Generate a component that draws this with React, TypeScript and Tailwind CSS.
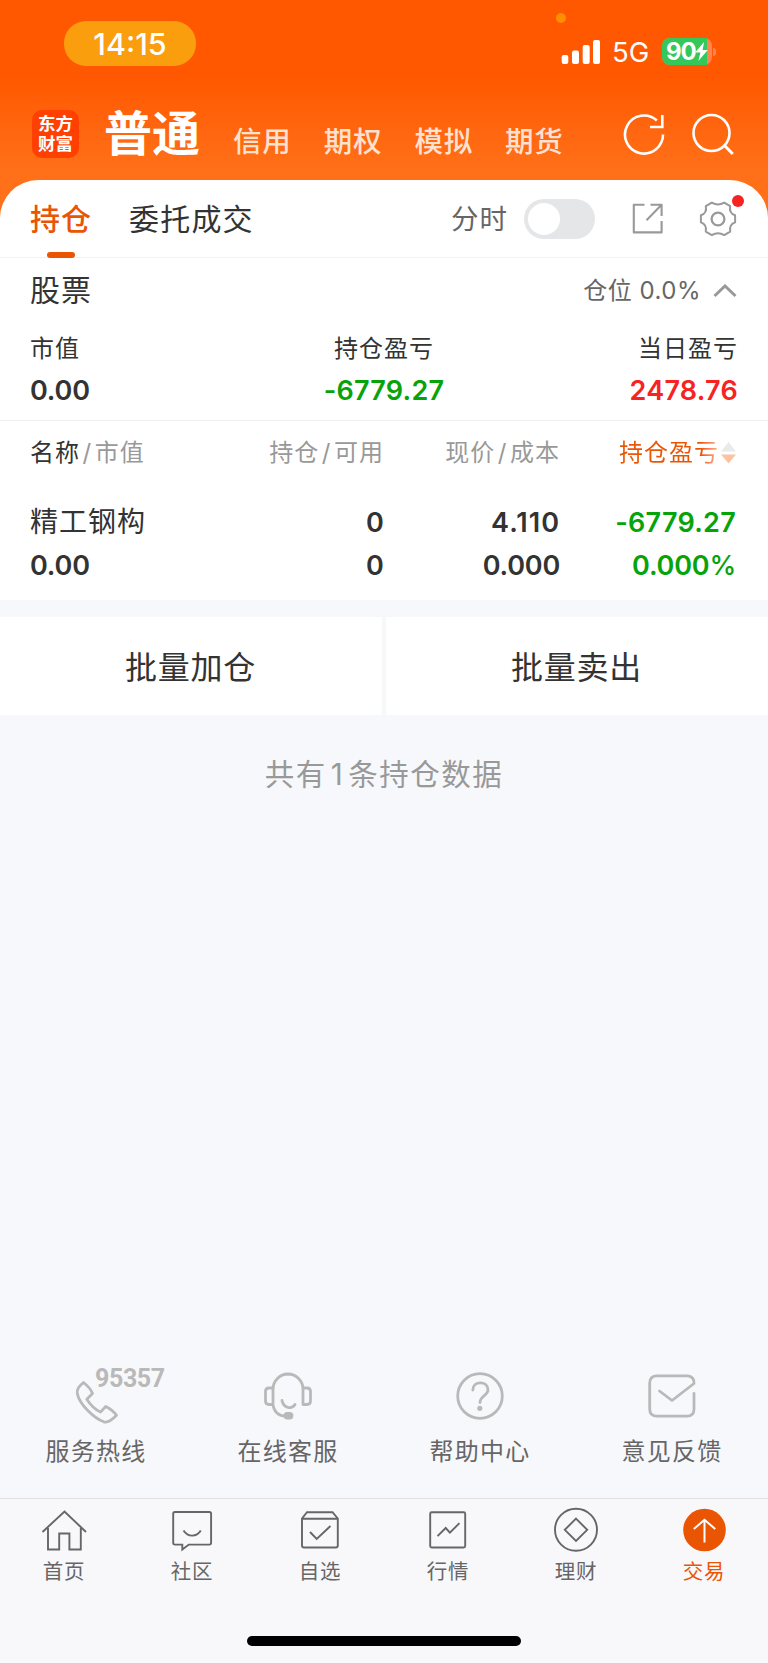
import type { ReactNode } from 'react';

const accounts = ['信用', '期权', '模拟', '期货'];

const RefreshIcon = () => (
  <svg className="w-[44px] h-[44px]" viewBox="622 112 44 44" fill="none" stroke="white" strokeWidth="2.6">
    <path d="M663 134.5a19 19 0 1 1-6.2-14" />
    <path d="M662.3 115v12h-12.3" />
  </svg>
);

const SearchIcon = () => (
  <svg className="w-[44px] h-[44px]" viewBox="691 111 44 44" fill="none" stroke="white" strokeWidth="2.6">
    <circle cx="711.5" cy="132" r="18" />
    <path d="M724.5 144.5l8.3 8.500" strokeWidth="3" />
  </svg>
);

const ShareIcon = () => (
  <svg className="w-[32px] h-[32px]" viewBox="632 203 32 32" fill="none" stroke="#999" strokeWidth="2.1" strokeLinejoin="round">
    <path d="M644.500 204.800h-10.700v27.600h27.800v-11.400" />
    <path d="M650.500 204.800h11.100v11.200M661.600 204.800L646.500 220.200" />
  </svg>
);

const GearIcon = () => (
  <svg className="w-[38px] h-[38px]" viewBox="699.5 200 38 38" fill="none" stroke="#999" strokeWidth="2" strokeLinejoin="round">
    <path d="M712.300 202.600Q718.500 206.400 724.700 202.600L730.700 206.200Q729.300 213.200 735.600 215.200V222.400Q729.300 224.600 730.700 231.600L724.700 235.100Q718.500 231.400 712.300 235.100L706.300 231.600Q707.700 224.600 701.400 222.400V215.200Q707.700 213.200 706.300 206.200Z" />
    <circle cx="718.500" cy="219" r="6.400" strokeWidth="2.300" />
  </svg>
);

const services: { label: string; box: string; icon: ReactNode }[] = [
  {
    label: '服务热线',
    box: '70 1366 52 60',
    icon: (
      <path d="M83.500 1382.500c-3.500 3-7 6-6.200 11 2 11 17 25 26.500 28.300 4.200 1.300 8-1.500 12.700-6.500-2.500-3.500-6-6.500-10.800-8.800l-5.200 5.600c-5.500-2.500-10-7-13.700-12.800l5.700-5.800c-1.500-4-4.500-7.500-9-11z" />
    ),
  },
  {
    label: '在线客服',
    box: '262.500 1366 52 60',
    icon: (
      <g>
        <path d="M273.500 1403v-14a15.200 15.200 0 0 1 15-15h0a15.200 15.200 0 0 1 15 15v15.500h4q3.500 0 3.500-3.500v-9.500q0-3.500-3.500-3.500h-4" />
        <path d="M273.500 1388h-4q-3.500 0-3.500 3.500v9.500q0 3.500 3.500 3.500h4c.5 6 4.500 11.500 12.500 11.500" />
        <path d="M282.500 1400.500c1.500 8 10 9 13 4" />
        <rect x="285.500" y="1413.500" width="7" height="4.500" rx="2.200" fill="#b9b9b9" />
      </g>
    ),
  },
  {
    label: '帮助中心',
    box: '454.500 1366 52 60',
    icon: (
      <g>
        <circle cx="480.500" cy="1396" r="22.300" />
        <path d="M473.300 1390c0-9.500 15.200-9.500 15.200 0 0 5.500-8 6-8 12.500" />
        <circle cx="480.300" cy="1408.300" r="1.200" fill="#b9b9b9" />
      </g>
    ),
  },
  {
    label: '意见反馈',
    box: '646 1366 52 60',
    icon: (
      <path d="M694 1393.500v15.500q0 7.200-7 7.200h-30q-7.300 0-7.300-7.200v-26q0-7.200 7.300-7.200h30c5.500 0 7.500 4.500 7 7.700L672 1400.500l-12.500-9.500" />
    ),
  },
];

const tabs: { label: string; box: string; icon: ReactNode }[] = [
  {
    label: '首页',
    box: '40 1506 48 48',
    icon: <path d="M42.500 1532L64.500 1511.500L86 1532M48 1528v21.500h11.200v-16h10.200v16h11.400V1528" />,
  },
  {
    label: '社区',
    box: '168 1506 48 48',
    icon: (
      <g>
        <path d="M175 1512h34.300q1.800 0 1.800 1.800v29q0 1.800-1.800 1.800h-20.500l-6.500 5v-5h-7.300q-1.800 0-1.800-1.800v-29q0-1.800 1.800-1.800z" />
        <path d="M183.500 1530.500c4.500 6.800 13 6.800 17.300 0" />
      </g>
    ),
  },
  {
    label: '自选',
    box: '296 1506 48 48',
    icon: (
      <g>
        <path d="M302 1518.500l5-6.300h25.500l5.300 6.300v27q0 2-2 2h-31.800q-2 0-2-2zM302 1518.700h35.800" />
        <path d="M310 1532l6.700 7L330.500 1526" />
      </g>
    ),
  },
  {
    label: '行情',
    box: '424 1506 48 48',
    icon: (
      <g>
        <rect x="430.200" y="1512.300" width="35" height="35.200" rx="1.500" />
        <path d="M437.500 1536.200l8.200-8.200 4.200 4.700 9.500-9.500" />
      </g>
    ),
  },
  {
    label: '理财',
    box: '552 1506 48 48',
    icon: (
      <g>
        <circle cx="576" cy="1529.800" r="21" />
        <path d="M576 1518.600l11.200 11.200-11.200 11.200-11.200-11.200z" />
      </g>
    ),
  },
  {
    label: '交易',
    box: '680 1506 48 48',
    icon: (
      <g>
        <circle cx="704.500" cy="1530" r="21.300" fill="#ea5504" stroke="none" />
        <path d="M704.500 1542.500v-22.500M693.800 1529l10.700-9.200 10.700 9.200" stroke="white" strokeWidth="2" />
      </g>
    ),
  },
];

const StatusBar = () => (
  <div className="relative h-[88px] pt-[21px] pl-16 pr-[52px] flex justify-between text-white">
    <div className="w-[132px] h-[45px] pt-[1px] rounded-[22px] bg-[#fa9e0d] flex items-center justify-center text-[30.500px] leading-none font-medium">
      14:15
    </div>
    <span className="absolute left-[556px] top-[13px] size-[10px] rounded-full bg-[#ff8f00]" />
    <div className="flex items-center h-[61px]">
      <svg className="w-[40px] h-[26px] mr-[11px]" viewBox="561 38 40 26" fill="white">
        <rect x="561.700" y="54" width="6.600" height="9" rx="2" />
        <rect x="572" y="49.500" width="7" height="13.500" rx="2" />
        <rect x="582.700" y="44" width="7" height="19" rx="2" />
        <rect x="593" y="39" width="7" height="24" rx="2" />
      </svg>
      <span className="w-[50px] pt-[2px] text-[27.500px] leading-none">5G</span>
      <div className="w-[50px] h-[27px] rounded-[8px] bg-[#ff8450]">
        <div className="w-[45px] h-full rounded-l-[8px] bg-[#34c759] flex items-center pl-[4px]">
          <span className="text-[24px] leading-[27px] font-bold tracking-[-1px]">90</span>
          <svg className="w-[13px] h-[19px] shrink-0 -ml-[1px]" viewBox="0 0 12 18" fill="white">
            <path d="M8.500 0L0 10h5L3 18l9-10.500H7z" />
          </svg>
        </div>
      </div>
      <span className="w-[3px] h-[8px] ml-[1px] rounded-r-full bg-[#ff8450]" />
    </div>
  </div>
);

const Header = () => (
  <header className="h-[220px] bg-linear-to-b from-[#ff5800] from-[35%] to-[#ff7018] to-[78%]">
    <StatusBar />
    <div className="flex items-center h-[92px] pl-8">
      <div className="w-[47px] h-[48px] rounded-[10px] bg-[#ff4000] text-white text-[17.500px] leading-[20px] font-bold flex flex-col items-center justify-center">
        <span>东方</span>
        <span>财富</span>
      </div>
      <h1 className="ml-[25px] w-[129px] text-[48px] leading-none font-bold text-white">普通</h1>
      <nav className="flex w-[389px] gap-[32px] pt-[16px] text-[28.500px] leading-none font-medium tracking-[0.800px] text-[#ffe1d1]">
        {accounts.map((name) => (
          <span key={name} className="w-[58.700px] whitespace-nowrap">{name}</span>
        ))}
      </nav>
      <div className="flex shrink-0 gap-[25px]">
        <RefreshIcon />
        <SearchIcon />
      </div>
    </div>
  </header>
);

const TabsRow = () => (
  <div className="flex items-center h-[78px] pl-[30px] border-b border-[#f2f2f4]">
    <div className="relative w-[99px] h-full pt-[2px] flex items-center text-[30px] font-medium tracking-[1px] text-[#ea5504]">
      持仓
      <span className="absolute left-[17px] bottom-[-1px] w-[28px] h-[6px] rounded-[3px] bg-[#ea5504]" />
    </div>
    <span className="w-[322px] pt-[2px] text-[30px] tracking-[1.200px]">委托成交</span>
    <span className="w-[73px] pt-[3px] text-[27.500px] tracking-[1px] text-[#666]">分时</span>
    <div className="w-[71px] h-[40px] p-[4px] rounded-full bg-[#e5e6e8]">
      <div className="size-[32px] rounded-full bg-white" />
    </div>
    <div className="ml-[37px] mr-[35px]">
      <ShareIcon />
    </div>
    <div className="relative">
      <GearIcon />
      <span className="absolute left-[33px] -top-[5px] size-[12px] rounded-full bg-[#f72222]" />
    </div>
  </div>
);

const Summary = () => (
  <section className="h-[163px] px-[30px] border-b border-[#f0f0f2]">
    <div className="flex items-center justify-between h-[65px]">
      <h2 className="text-[30px] tracking-[1px]">股票</h2>
      <div className="flex items-center text-[24px] tracking-[0.500px] text-[#666]">
        仓位 0.0%
        <svg className="w-[24px] h-[14px] ml-[12px] mr-[1px]" viewBox="0 0 24 14" fill="none" stroke="#999" strokeWidth="3">
          <path d="M1.500 12L12 2l10.500 10" />
        </svg>
      </div>
    </div>
    <div className="grid grid-cols-3 text-[24px] leading-[42px] tracking-[1px] pt-[5px]">
      <span>市值</span>
      <span className="text-center">持仓盈亏</span>
      <span className="text-right">当日盈亏</span>
    </div>
    <div className="grid grid-cols-3 text-[27px] leading-[41px] font-semibold tracking-[0.250px]">
      <span className="tracking-[-0.200px]">0.00</span>
      <span className="text-center text-[#07a30a]">-6779.27</span>
      <span className="text-right text-[#f72222]">2478.76</span>
    </div>
  </section>
);

const Holdings = () => (
  <section className="h-[179px] pl-[30px] pr-[32px]">
    <div className="grid grid-cols-[180px_174px_176px_1fr] h-[64px] items-center text-right text-[24px] tracking-[1px] text-[#999] whitespace-nowrap">
      <span className="text-left flex items-center">
        <span className="text-[#333]">名称</span>
        <span className="px-[2.500px]">/</span>市值
      </span>
      <span>持仓<span className="px-[2.500px]">/</span>可用</span>
      <span>现价<span className="px-[2.500px]">/</span>成本</span>
      <span className="flex items-center justify-end">
        <span className="bg-linear-to-r from-[#ea5504] from-[82%] to-[#ffb48c] bg-clip-text text-transparent">持仓盈亏</span>
        <svg className="w-[15px] h-[22px] ml-[2px]" viewBox="0 0 15 22">
          <path d="M7.500 0L15 9.500H0z" fill="#e9eaeb" />
          <path d="M0 12.500h15L7.500 21.500z" fill="#fbc3a2" />
        </svg>
      </span>
    </div>
    <div className="grid grid-cols-[180px_174px_176px_1fr] pt-[16px] text-right text-[27px] leading-[43px] font-semibold tracking-[0.250px]">
      <span className="text-left text-[28px] font-normal tracking-[1px]">精工钢构</span>
      <span>0</span>
      <span className="tracking-[1px]">4.110</span>
      <span className="text-[#07a30a]">-6779.27</span>
      <span className="text-left tracking-[-0.200px]">0.00</span>
      <span>0</span>
      <span className="tracking-[-0.200px]">0.000</span>
      <span className="text-[#07a30a] tracking-[-0.200px]">0.000<span className="font-medium">%</span></span>
    </div>
  </section>
);

export default function App() {
  return (
    <div className="flex flex-col w-[768px] h-[1663px] overflow-hidden bg-[#f7f8fb] text-[#333] font-['Inter','Noto_Sans_CJK_SC',sans-serif]">
      <Header />
      <main className="-mt-10 bg-white rounded-t-[38px]">
        <TabsRow />
        <Summary />
        <Holdings />
      </main>
      <div className="grid grid-cols-2 gap-[4px] h-[98px] mt-[17px] text-[32px] tracking-[0.800px]">
        <button className="pt-[3px] pr-[1px] bg-white">批量加仓</button>
        <button className="pt-[3px] pr-[1px] bg-white">批量卖出</button>
      </div>
      <p className="mt-[38px] text-center text-[29.500px] leading-[42px] tracking-[1.500px] text-[#999]">
        共有<span className="px-[4px]">1</span>条持仓数据
      </p>

      <div className="grid grid-cols-4 mt-auto h-[132px]">
        {services.map((item, i) => (
          <div key={item.label} className="relative flex flex-col items-center">
            <svg className="w-[52px] h-[60px]" viewBox={item.box} fill="none" stroke="#b9b9b9" strokeWidth="2.800" strokeLinecap="round" strokeLinejoin="round">
              {item.icon}
            </svg>
            {i === 0 && (
              <span className="absolute left-[95px] top-[2px] font-['Roboto'] text-[25px] leading-[22px] font-bold tracking-[-0.400px] text-[#b9b9b9]">95357</span>
            )}
            <span className="mt-[6px] text-[24px] leading-[40px] tracking-[1.200px] text-[#666]">{item.label}</span>
          </div>
        ))}
      </div>

      <footer className="h-[165px] border-t border-[#e0e0e3] bg-[#f8f8fb]">
        <nav className="grid grid-cols-6 pt-[7px]">
          {tabs.map((tab) => (
            <div key={tab.label} className="flex flex-col items-center">
              <svg className="size-[48px]" viewBox={tab.box} fill="none" stroke="#666" strokeWidth="1.900">
                {tab.icon}
              </svg>
              <span className={`text-[20.500px] leading-[36px] tracking-[0.800px] ${tab.label === '交易' ? 'text-[#ea5504]' : 'text-[#666]'}`}>
                {tab.label}
              </span>
            </div>
          ))}
        </nav>
        <div className="w-[274px] h-[10px] mt-[46px] mx-auto rounded-full bg-black" />
      </footer>
    </div>
  );
}
